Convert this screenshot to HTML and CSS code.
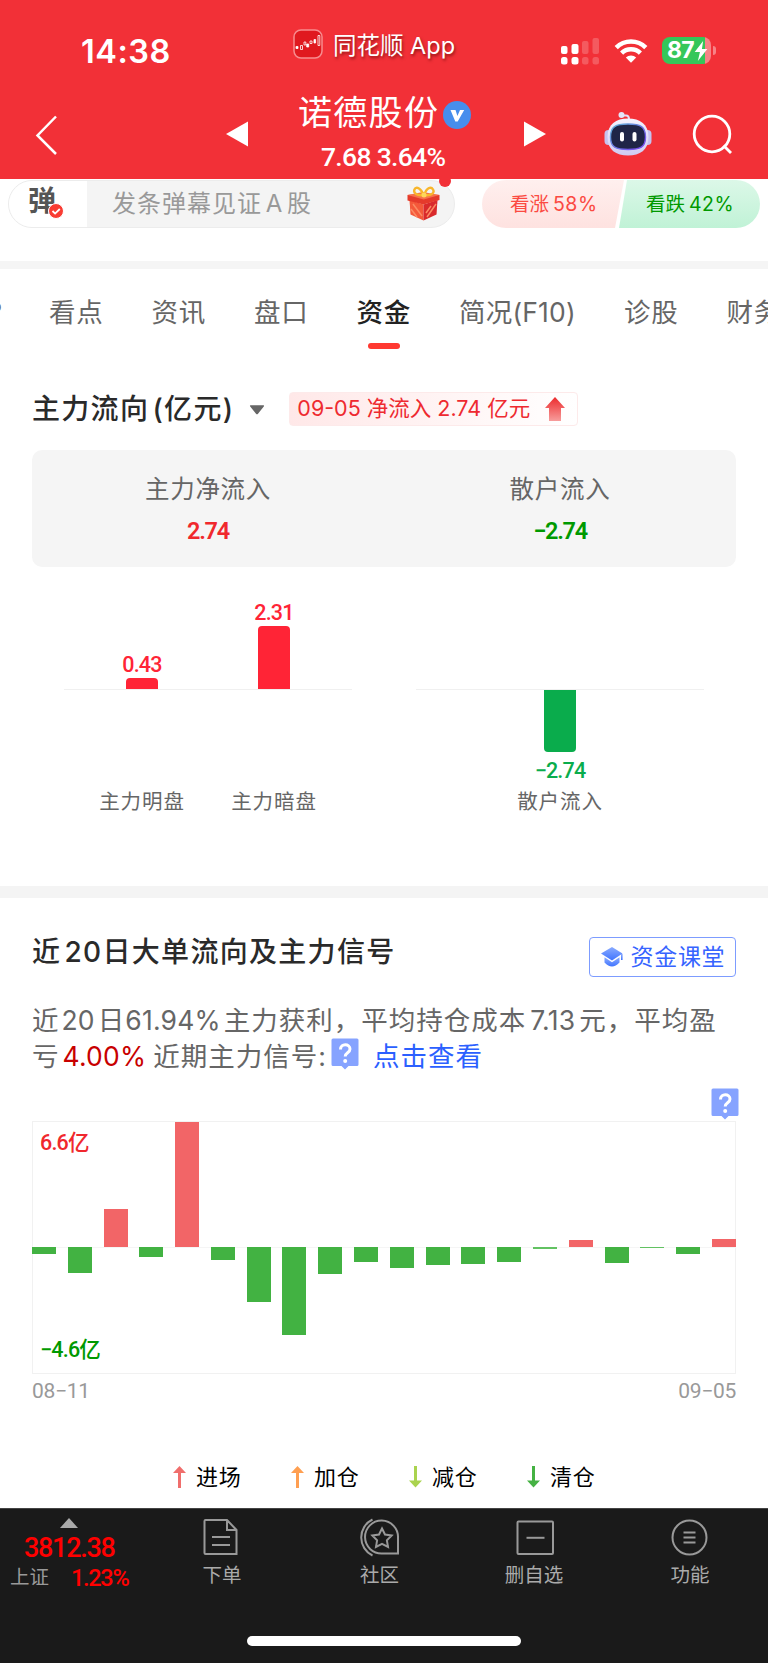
FILE: index.html
```html
<!DOCTYPE html>
<html lang="zh-CN">
<head>
    <meta charset="UTF-8">
    <meta name="viewport" content="width=device-width, initial-scale=1.0">
    <title>诺德股份 - 资金</title>
    <link rel="stylesheet" href="styles.css">
</head>
<body>
    <header class="header">
        <div class="status-bar">
            <span class="time">14:38</span>
            <div class="app-name">
                <svg width="30" height="30" viewBox="0 0 30 30">
                    <rect x="1" y="1" width="28" height="28" rx="7" fill="#e0191f" stroke="#f78c8f" stroke-width="1.5"/>
                    <g fill="#fff" stroke="#fff" stroke-width="0.8">
                        <path d="M3 17.500h2v2H3zM13.700 15h2v3h-2zM21 10.500h1.600v3.500H21z"/>
                        <path d="M7.500 16.500h2v4h-2zM11 13h1.800v3H11zM17 12h2v2.500h-2zM25 6.500h1.800v10H25z" fill="none"/>
                    </g>
                </svg>
                <span>同花顺 App</span>
            </div>
            <div class="status-icons">
                <svg class="signal" width="40" height="28" viewBox="0 0 40 28" fill="#fff">
                    <rect x="1" y="9" width="6.500" height="8" rx="2"/>
                    <rect x="1" y="20" width="6.500" height="7.500" rx="2.500"/>
                    <rect x="11.500" y="7" width="7" height="10" rx="2"/>
                    <rect x="11.500" y="20" width="7" height="7.500" rx="2.500"/>
                    <g opacity="0.2">
                        <rect x="22" y="4" width="6.500" height="13" rx="2"/>
                        <rect x="22" y="20" width="6.500" height="7.500" rx="2.500"/>
                        <rect x="32.500" y="1" width="6.500" height="16" rx="2"/>
                        <rect x="32.500" y="20" width="6.500" height="7.500" rx="2.500"/>
                    </g>
                </svg>
                <svg class="wifi" width="34" height="26" viewBox="0 0 34 26">
                    <g fill="none" stroke="#fff" stroke-width="4.500">
                        <path d="M2.200 9.600a21 21 0 0 1 29.600 0"/>
                        <path d="M7.600 15.200a13.400 13.400 0 0 1 18.800 0"/>
                    </g>
                    <path d="M17 24.800l-5.200-5.300a7.500 7.500 0 0 1 10.400 0z" fill="#fff"/>
                </svg>
                <div class="battery">
                    <span>87</span>
                    <svg width="14" height="20" viewBox="0 0 13 19"><path d="M8.500 0L0.500 10.500h5L3.500 19l9-11.500H7.400z" fill="#fff"/></svg>
                </div>
                <i class="battery-nub"></i>
            </div>
        </div>
        <div class="nav-bar">
            <svg class="back" width="24" height="42" viewBox="0 0 24 42"><path d="M22 2.500L3.500 21.500l18.500 18.500" fill="none" stroke="#fff" stroke-width="2.500"/></svg>
            <svg class="prev" width="22" height="26" viewBox="0 0 22 26"><path d="M22 0.500v25L0 13z" fill="#fff"/></svg>
            <div class="stock">
                <div class="stock-name">
                    <span>诺德股份</span>
                    <svg width="28" height="28" viewBox="0 0 28 28"><circle cx="14" cy="14" r="14" fill="#478eed"/><path d="M7.500 9h5l1.900 6L17 9h4.200l-6.500 11.500h-2.400z" fill="#fff"/></svg>
                </div>
                <div class="stock-price">7.68 3.64%</div>
            </div>
            <svg class="next" width="22" height="26" viewBox="0 0 22 26"><path d="M0 0.500v25L22 13z" fill="#fff"/></svg>
            <svg class="robot" width="48" height="46" viewBox="0 0 48 46">
                <defs>
                    <linearGradient id="shell" x1="0" y1="0" x2="0" y2="1">
                        <stop offset="0" stop-color="#f4f3ff"/>
                        <stop offset="1" stop-color="#cfcbf2"/>
                    </linearGradient>
                    <linearGradient id="visor" x1="0" y1="0" x2="1" y2="1">
                        <stop offset="0" stop-color="#5fb4d6"/>
                        <stop offset="1" stop-color="#7a3ff0"/>
                    </linearGradient>
                </defs>
                <path d="M18 4.500h4c3 0 3 2 3 4" fill="none" stroke="#e4e0f7" stroke-width="2"/>
                <circle cx="17.500" cy="4" r="3" fill="#e4e6fa"/>
                <rect x="0.500" y="19" width="8" height="15" rx="4" fill="#c6c2ef"/>
                <rect x="39.500" y="19" width="8" height="15" rx="4" fill="#c6c2ef"/>
                <path d="M24 7.500C36 7.500 44.500 13 44.500 26S36 44.500 24 44.500 3.500 39 3.500 26 12 7.500 24 7.500z" fill="url(#shell)"/>
                <path d="M24 13c12.500 0 17.500 2.500 17.500 13S36 38.500 24 38.500 6.500 36.500 6.500 26 11.500 13 24 13z" fill="#1f2547" stroke="url(#visor)" stroke-width="1.400"/>
                <rect x="16" y="21" width="4" height="9.500" rx="2" fill="#fff"/>
                <rect x="28.500" y="21" width="4" height="9.500" rx="2" fill="#fff"/>
            </svg>
            <svg class="search" width="40" height="40" viewBox="0 0 40 40" fill="none" stroke="#fff" stroke-width="2.800"><circle cx="20" cy="20" r="17.800"/><path d="M31.500 31.500l7.500 7.500"/></svg>
        </div>
    </header>

    <div class="danmu-bar">
        <div class="danmu-input">
            <div class="danmu-logo">
                <b>弹</b>
                <svg class="danmu-check" width="16" height="16" viewBox="0 0 16 16"><circle cx="8" cy="8" r="7.500" fill="#f93c33" stroke="#fff"/><path d="M4.500 8l2.600 2.600L11.800 6" fill="none" stroke="#fff" stroke-width="1.800"/></svg>
            </div>
            <span class="placeholder">发条弹幕见证 A 股</span>
            <svg class="gift" width="33" height="35" viewBox="0 0 33 35">
                <path d="M2.500 14l14 4.500v16L3.500 28.500z" fill="#f4593a"/>
                <path d="M30.500 14l-14 4.500v16l13-6z" fill="#d92a2c"/>
                <path d="M0.500 9L14 7.500l18.500 1.500v5l-16 4.500-16-4z" fill="#e53a2b"/>
                <path d="M0.500 9L16 6l16.500 3-15.800 4.500z" fill="#f7714a"/>
                <path d="M6 18l9 12M20 31l9-13M4 23l6 8M24 20l-5 7" stroke="#fb8a62" stroke-width="1.500"/>
                <path d="M16.500 9C14 2 9 0 7.500 3.500S10 10 16.500 9zM17.500 9C19 2 24 0 26 3.500S24 10 17.500 9z" fill="none" stroke="#f8b62c" stroke-width="2.400"/>
                <circle cx="17" cy="9" r="2.500" fill="#ffd65c"/>
            </svg>
            <i class="red-dot"></i>
        </div>
        <div class="vote">
            <div class="vote-up">看涨<span>58%</span></div>
            <div class="vote-down">看跌<span>42%</span></div>
        </div>
    </div>

    <nav class="tabs">
        <span class="tab tab-cut">?</span>
        <span class="tab">看点</span>
        <span class="tab">资讯</span>
        <span class="tab">盘口</span>
        <span class="tab active">资金</span>
        <span class="tab tab-wide">简况(F10)</span>
        <span class="tab">诊股</span>
        <span class="tab">财务</span>
    </nav>

    <section class="flow">
        <div class="flow-head">
            <h2>主力流向 (亿元)</h2>
            <svg class="caret" width="16" height="10" viewBox="0 0 16 10"><path d="M1.500 0.300h13q1 .3.300 1.200L9 8.800q-1 1-2 0L1.200 1.500q-.7-.9.300-1.200z" fill="#666"/></svg>
            <div class="flow-tag">
                <span>09-05 净流入 2.74 亿元</span>
                <svg width="20" height="24" viewBox="0 0 20 24">
                    <defs>
                        <linearGradient id="arrow" x1="0" y1="0" x2="0" y2="1">
                            <stop offset="0" stop-color="#ec2a2c"/>
                            <stop offset="1" stop-color="#f79d9c"/>
                        </linearGradient>
                    </defs>
                    <path d="M10 0l10 11h-4v13H4V11H0z" fill="url(#arrow)"/>
                </svg>
            </div>
        </div>
        <div class="summary">
            <div class="summary-item">
                <span>主力净流入</span>
                <b class="red">2.74</b>
            </div>
            <div class="summary-item">
                <span>散户流入</span>
                <b class="green">−2.74</b>
            </div>
        </div>
        <div class="flow-charts">
            <div class="flow-chart">
                <div class="flow-col">
                    <div class="plus"><b>0.43</b><i style="height: 11.500px"></i></div>
                    <div class="minus"></div>
                    <span>主力明盘</span>
                </div>
                <div class="flow-col">
                    <div class="plus"><b>2.31</b><i style="height: 63px"></i></div>
                    <div class="minus"></div>
                    <span>主力暗盘</span>
                </div>
            </div>
            <div class="flow-chart">
                <div class="flow-col">
                    <div class="plus"></div>
                    <div class="minus"><i style="height: 62px"></i><b>−2.74</b></div>
                    <span>散户流入</span>
                </div>
            </div>
        </div>
    </section>

    <section class="signal-section">
        <div class="signal-head">
            <h2>近 20日大单流向及主力信号</h2>
            <a class="class-btn">
                <svg width="22" height="20" viewBox="0 0 22 20">
                    <defs>
                        <linearGradient id="cap" x1="0" y1="0" x2="0" y2="1">
                            <stop offset="0" stop-color="#8aabff"/>
                            <stop offset="1" stop-color="#3f74ff"/>
                        </linearGradient>
                    </defs>
                    <g fill="url(#cap)">
                        <path d="M11 0l10.500 6.500L11 13.500 0 6.500z"/>
                        <path d="M3.500 10.300l7.500 5 7.500-5v5.200Q11 23.500 3.500 15.500z"/>
                        <path d="M20 7h1.600v6H20z"/>
                    </g>
                </svg>
                <span>资金课堂</span>
            </a>
        </div>
        <div class="desc">
            <p class="line-1">近<span class="n1">20</span>日<span class="n2">61.94%</span>主力获利，平均持仓成本<span class="n3">7.13</span>元，平均盈</p>
            <p class="line-2">亏<span class="cost">4.00%</span>近期主力信号<span class="colon">:</span><svg class="help" width="28" height="33" viewBox="0 0 28 33"><path d="M2 0.500h24q1.500 0 1.500 1.500v24.500q0 1.500-1.500 1.500h-8.500L14 31.500 10.500 28H2q-1.500 0-1.500-1.500V2q0-1.500 1.500-1.500z" fill="#86a3ff"/><path d="M9.500 11.500c0-6.500 9.500-6 9.500-0.500 0 4-4.800 3.500-4.800 7.500" fill="none" stroke="#fff" stroke-width="3"/><circle cx="14.200" cy="23" r="2" fill="#fff"/></svg><a>点击查看</a></p>
        </div>
        <div class="chart-help">
            <svg class="help" width="28" height="33" viewBox="0 0 28 33"><path d="M2 0.500h24q1.500 0 1.500 1.500v24.500q0 1.500-1.500 1.500h-8.500L14 31.500 10.500 28H2q-1.500 0-1.500-1.500V2q0-1.500 1.500-1.500z" fill="#86a3ff"/><path d="M9.500 11.500c0-6.500 9.500-6 9.500-0.500 0 4-4.800 3.500-4.800 7.500" fill="none" stroke="#fff" stroke-width="3"/><circle cx="14.200" cy="23" r="2" fill="#fff"/></svg>
        </div>
        <div class="chart">
            <div class="bars">
                <i class="down" style="height: 7px"></i>
                <i class="down" style="height: 26px"></i>
                <i class="up" style="height: 38px"></i>
                <i class="down" style="height: 10px"></i>
                <i class="up" style="height: 125px"></i>
                <i class="down" style="height: 13px"></i>
                <i class="down" style="height: 54.500px"></i>
                <i class="down" style="height: 88px"></i>
                <i class="down" style="height: 26.500px"></i>
                <i class="down" style="height: 14.500px"></i>
                <i class="down" style="height: 20.500px"></i>
                <i class="down" style="height: 17.500px"></i>
                <i class="down" style="height: 16.500px"></i>
                <i class="down" style="height: 14.500px"></i>
                <i class="down thin" style="height: 2px"></i>
                <i class="up" style="height: 6.700px"></i>
                <i class="down" style="height: 15.700px"></i>
                <i class="down thin" style="height: 1px"></i>
                <i class="down" style="height: 6.700px"></i>
                <i class="up" style="height: 8.300px"></i>
            </div>
            <span class="max">6.6亿</span>
            <span class="min">−4.6亿</span>
        </div>
        <div class="dates"><span>08−11</span><span>09−05</span></div>
        <div class="legend">
            <span><svg width="13" height="22" viewBox="0 0 13 22" fill="#f06e6c"><path d="M6.500 0L13 7H8v15H5V7H0z"/></svg>进场</span>
            <span><svg width="13" height="22" viewBox="0 0 13 22" fill="#ff9f51"><path d="M6.500 0L13 7H8v15H5V7H0z"/></svg>加仓</span>
            <span><svg width="13" height="22" viewBox="0 0 13 22" fill="#aad34f"><path d="M6.500 21.500L13 14.500H8V0H5v14.500H0z"/></svg>减仓</span>
            <span><svg width="13" height="22" viewBox="0 0 13 22" fill="#45b243"><path d="M6.500 21.500L13 14.500H8V0H5v14.500H0z"/></svg>清仓</span>
        </div>
    </section>

    <footer class="bottom-bar">
        <div class="bottom-nav">
            <div class="index">
                <svg width="18" height="10" viewBox="0 0 18 10"><path d="M9 0l9 10H0z" fill="#aaa"/></svg>
                <b>3812.38</b>
                <p><span>上证</span><em>1.23%</em></p>
            </div>
            <div class="nav-item">
                <svg width="40" height="40" viewBox="0 0 40 40" fill="none" stroke="#999" stroke-width="2"><path d="M3.500 3h21.500l9.500 10v24H3.500q-1 0-1-1V4q0-1 1-1zM25 3v10h9.500M10 20h18M10 28h18"/></svg>
                <span>下单</span>
            </div>
            <div class="nav-item community">
                <svg width="42" height="40" viewBox="0 0 42 40" fill="none" stroke="#999" stroke-width="2"><path d="M39 36.500H23.500A16.500 16.500 0 1 1 39 21zM13.500 2.500a20 20 0 0 0 0 36M23 11.500l3 6 6.700 1-4.800 4.800 1.100 6.600-6-3.100-6 3.100 1.100-6.600-4.800-4.800 6.700-1z"/></svg>
                <span>社区</span>
            </div>
            <div class="nav-item">
                <svg width="40" height="40" viewBox="0 0 40 40" fill="none" stroke="#999" stroke-width="2"><rect x="3.500" y="4.500" width="35.500" height="32.500" rx="1"/><path d="M12.500 20.800h18"/></svg>
                <span>删自选</span>
            </div>
            <div class="nav-item">
                <svg width="40" height="40" viewBox="0 0 40 40" fill="none" stroke="#999" stroke-width="2"><circle cx="19.500" cy="20.500" r="17"/><path d="M13.500 15.500h12M13.500 20.500h12M13.500 25.500h12"/></svg>
                <span>功能</span>
            </div>
        </div>
        <div class="home-indicator"></div>
    </footer>
</body>
</html>
```
FILE: styles.css
```css
* {
    box-sizing: border-box;
}
body {
    margin: 0;
    width: 768px;
    height: 1663px;
    overflow: hidden;
    display: flex;
    flex-direction: column;
    background: #fff;
    font-family: Inter, "Noto Sans CJK SC", sans-serif;
    color: #666;
    white-space: nowrap;
}
svg {
    display: block;
    flex: none;
}
h2, p {
    margin: 0;
}
i, em {
    font-style: normal;
}

/* header */
.header {
    position: relative;
    z-index: 2;
    height: 179px;
    flex: none;
    background: #f23037;
    color: #fff;
}
.status-bar {
    display: flex;
    height: 90px;
    padding-top: 28px;
}
.time {
    width: 212px;
    padding-left: 81px;
    font-size: 32.5px;
    font-weight: 600;
    line-height: 47px;
    letter-spacing: 0.5px;
}
.app-name {
    display: flex;
    width: 267px;
    margin-left: 81px;
    padding-top: 1px;
    font-size: 23.5px;
    line-height: 33px;
    text-shadow: 1px 2px 3px rgba(80, 0, 0, 0.6);
}
.app-name span {
    margin-left: 10px;
}
.status-icons {
    display: flex;
    padding-top: 9px;
}
.wifi {
    margin: 1px 0 0 14px;
}
.battery {
    display: flex;
    align-items: center;
    width: 49px;
    height: 27px;
    margin-left: 14px;
    padding-left: 5px;
    border-radius: 8px;
    background: linear-gradient(90deg, #35c759 43px, #f78387 43px);
    font-size: 23px;
    font-weight: 700;
    line-height: 27px;
}
.battery span {
    letter-spacing: -0.8px;
}
.battery-nub {
    width: 3px;
    height: 9px;
    margin: 9px 0 0 2px;
    border-radius: 0 4px 4px 0;
    background: #f78387;
}
.nav-bar {
    display: flex;
}
.back {
    margin: 24px 0 0 34px;
}
.prev {
    margin: 31px 0 0 168px;
}
.stock {
    width: 174px;
    margin-left: 50px;
}
.stock-name {
    display: flex;
    align-items: center;
    height: 50px;
    font-size: 34px;
    line-height: 46px;
    letter-spacing: 1.3px;
}
.stock-name span {
    padding-bottom: 4px;
}
.stock-name svg {
    margin-left: 4px;
}
.stock-price {
    padding-left: 23px;
    margin-top: 2px;
    font-family: Roboto, sans-serif;
    font-size: 26.5px;
    font-weight: 500;
    line-height: 30px;
    letter-spacing: -0.7px;
}
.next {
    margin: 31px 0 0 52px;
}
.robot {
    margin: 21px 0 0 58px;
}
.search {
    margin: 24px 0 0 40px;
}

/* danmu */
.danmu-bar {
    display: flex;
    height: 90px;
    flex: none;
    padding: 1px 8px 0;
    border-bottom: 8px solid #f5f5f5;
}
.danmu-input {
    position: relative;
    display: flex;
    width: 447px;
    height: 48px;
    border: 1.5px solid #ececec;
    border-radius: 24px;
    background: #f4f4f4;
}
.danmu-logo {
    position: relative;
    width: 78px;
    border-radius: 23px 0 0 23px;
    background: #fff;
    padding-left: 19px;
    font-size: 28px;
    line-height: 40px;
    color: #555;
}
.danmu-check {
    position: absolute;
    left: 39px;
    top: 22px;
}
.placeholder {
    margin-left: 25px;
    font-size: 24px;
    line-height: 45px;
    letter-spacing: 1px;
    word-spacing: -4px;
    color: #999;
}
.gift {
    position: absolute;
    left: 398px;
    top: 5px;
}
.red-dot {
    position: absolute;
    left: 430px;
    top: -6px;
    width: 12px;
    height: 12px;
    border-radius: 50%;
    background: #f23037;
}
.vote {
    display: flex;
    margin-left: 27px;
    font-size: 19.5px;
    line-height: 48px;
}
.vote div {
    height: 48px;
}
.vote span {
    margin-left: 4px;
    letter-spacing: 0.5px;
}
.vote-up {
    width: 142px;
    padding-left: 28px;
    border-radius: 24px 0 0 24px;
    background: linear-gradient(#ffefee, #fee2e0);
    clip-path: polygon(0 0, 100% 0, 133px 100%, 0 100%);
    color: #fb4a42;
}
.vote-down {
    width: 141px;
    margin-left: -5px;
    padding-left: 27px;
    border-radius: 0 24px 24px 0;
    background: linear-gradient(#dcf8e8, #c0f2d6);
    clip-path: polygon(8px 0, 100% 0, 100% 100%, 0 100%);
    color: #090;
}

/* tabs */
.tabs {
    display: flex;
    flex: none;
    height: 102px;
    padding-top: 23px;
    font-size: 26.5px;
    line-height: 40px;
}
.tab {
    position: relative;
    flex: none;
    width: 54.5px;
    margin-right: 48px;
    letter-spacing: 0.8px;
}
.tab-cut {
    width: 2px;
    display: flex;
    justify-content: flex-end;
    margin-right: 47px;
    letter-spacing: 0;
}
.tab-wide {
    width: 117px;
    letter-spacing: 0.2px;
}
.active {
    color: #222;
    font-weight: 500;
}
.active::after {
    content: "";
    position: absolute;
    left: 11px;
    top: 51px;
    width: 32px;
    height: 6px;
    border-radius: 3px;
    background: #ff3931;
}

/* main capital flow */
.flow {
    flex: none;
    height: 527px;
    padding: 21px 32px 0;
    border-bottom: 12px solid #f4f4f4;
}
.flow-head {
    display: flex;
    height: 58px;
}
h2 {
    font-size: 28px;
    font-weight: 500;
    line-height: 34px;
    letter-spacing: 1.3px;
    word-spacing: -5.5px;
    color: #2a2a2a;
}
.caret {
    margin: 13px 0 0 15px;
}
.flow-tag {
    display: flex;
    width: 289px;
    height: 34px;
    margin-left: 24px;
    padding: 4px 0 0 7px;
    border: 1px solid #fdeaea;
    border-radius: 4px;
    background: linear-gradient(90deg, #ffe8e8, #fff);
    font-size: 21.5px;
    line-height: 23px;
    color: #ee2a30;
}
.flow-tag span {
    width: 248px;
}
.summary {
    display: grid;
    grid-template-columns: 1fr 1fr;
    height: 117px;
    margin-bottom: 1px;
    border-radius: 10px;
    background: #f5f5f5;
}
.summary-item {
    display: flex;
    flex-direction: column;
    align-items: center;
    padding-top: 20px;
}
.summary-item span {
    font-size: 24.5px;
    line-height: 38px;
    letter-spacing: 0.7px;
}
.summary-item b {
    margin-top: 8px;
    font-family: Roboto, sans-serif;
    font-size: 23.5px;
    font-weight: 600;
    line-height: 30px;
    letter-spacing: -1.3px;
}
.red {
    color: #f0282d;
}
.green {
    color: #090;
}
.flow-charts {
    display: flex;
    justify-content: space-between;
    padding: 0 32px;
}
.flow-chart {
    display: flex;
    justify-content: center;
    width: 288px;
    background: linear-gradient(#f0f0f0, #f0f0f0) 0 121px / 100% 1px no-repeat;
}
.flow-col {
    display: flex;
    flex-direction: column;
    align-items: center;
    width: 132px;
}
.plus {
    display: flex;
    flex-direction: column;
    justify-content: flex-end;
    align-items: center;
    height: 121px;
    color: #ff2436;
}
.minus {
    display: flex;
    flex-direction: column;
    align-items: center;
    height: 97px;
    margin-top: 1px;
    color: #0aac4c;
}
.flow-col i {
    width: 32px;
    background: currentColor;
}
.plus i {
    border-radius: 4px 4px 0 0;
}
.minus i {
    border-radius: 0 0 4px 4px;
}
.flow-col b {
    font-family: Roboto, sans-serif;
    font-size: 21.5px;
    font-weight: 500;
    line-height: 26px;
    letter-spacing: -0.8px;
}
.minus b {
    margin-top: 6px;
}
.flow-col span {
    font-size: 20.5px;
    line-height: 30px;
    letter-spacing: 0.9px;
}

/* 20 day signals */
.signal-section {
    flex: none;
    height: 610px;
    padding: 37px 32px 0;
}
.signal-head {
    display: flex;
    justify-content: space-between;
}
.class-btn {
    display: flex;
    align-items: center;
    width: 147.5px;
    height: 40px;
    margin-top: 2px;
    padding-left: 11px;
    border: 1.5px solid #7d9cff;
    border-radius: 4px;
    font-size: 23px;
    letter-spacing: 0.7px;
    color: #3664ff;
}
.class-btn span {
    margin-left: 8px;
    line-height: 36px;
}
.desc {
    margin-top: 25px;
    font-size: 26.5px;
    line-height: 36px;
    letter-spacing: 1px;
}
.desc p {
    display: flex;
}
.desc span {
    letter-spacing: 0.2px;
}
.n1 {
    margin: 0 3px 0 2px;
}
.n2 {
    margin-right: 3px;
}
.n3 {
    margin: 0 4px;
}
.line-2 .cost {
    margin: 0 7px 0 3px;
    color: #c80000;
}
.line-2 .help {
    margin: 0 14px 0 5px;
}
.desc a {
    color: #2b60ff;
}
.chart-help {
    display: flex;
    justify-content: flex-end;
    margin: 14px -2.5px 0 0;
}
.chart {
    position: relative;
    height: 253px;
    border: 1px solid #f1f1f1;
}
.bars {
    display: flex;
    justify-content: space-between;
    height: 251px;
    margin: 0 -1px;
    background: linear-gradient(#f5f5f5, #f5f5f5) 0 125px / 100% 1px no-repeat;
}
.bars i {
    width: 24px;
}
.down {
    margin-top: 125px;
    background: #42b242;
}
.up {
    align-self: flex-end;
    margin-bottom: 126px;
    background: #f26567;
}
.bars .thin {
    background: #62c262;
}
.max, .min {
    position: absolute;
    left: 7px;
    font-family: Roboto, "Noto Sans CJK SC", sans-serif;
    font-size: 21.5px;
    font-weight: 500;
    line-height: 26px;
    letter-spacing: -0.8px;
}
.max {
    top: 8px;
    color: #f0282d;
}
.min {
    bottom: 10px;
    color: #090;
}
.dates {
    display: flex;
    justify-content: space-between;
    font-family: Roboto, sans-serif;
    font-size: 21px;
    line-height: 34px;
    letter-spacing: -0.3px;
    color: #999;
}
.legend {
    display: flex;
    padding: 54px 0 0 141px;
    font-size: 22px;
    line-height: 30px;
    letter-spacing: 0.8px;
    color: #000;
}
.legend span {
    display: flex;
    align-items: center;
    width: 118px;
}
.legend svg {
    margin-right: 10px;
}

/* bottom bar */
.bottom-bar {
    flex: none;
    height: 155px;
    border-top: 1px solid #444;
    background: #1a1a1a;
}
.bottom-nav {
    display: flex;
    height: 127px;
}
.index {
    display: flex;
    flex-direction: column;
    width: 144px;
    padding-top: 9px;
    font-family: Roboto, "Noto Sans CJK SC", sans-serif;
    color: #f00;
}
.index svg {
    margin-left: 60px;
}
.index b {
    margin: 5px 0 0 24px;
    font-size: 27px;
    font-weight: 500;
    line-height: 30px;
    letter-spacing: -1.3px;
}
.index p {
    display: flex;
    padding-left: 10px;
    line-height: 30px;
}
.index span {
    width: 61px;
    font-size: 19.5px;
    color: #999;
}
.index em {
    font-size: 23.5px;
    font-weight: 500;
    letter-spacing: -1.3px;
}
.nav-item {
    display: flex;
    flex-direction: column;
    align-items: center;
    width: 156px;
    padding-top: 8px;
    color: #aaa;
}
.nav-item span {
    margin-top: 4px;
    font-size: 19.5px;
    line-height: 28px;
}
.community {
    padding-left: 3px;
}
.home-indicator {
    width: 274px;
    height: 10px;
    margin: 0 auto;
    border-radius: 5px;
    background: #fff;
}
```
